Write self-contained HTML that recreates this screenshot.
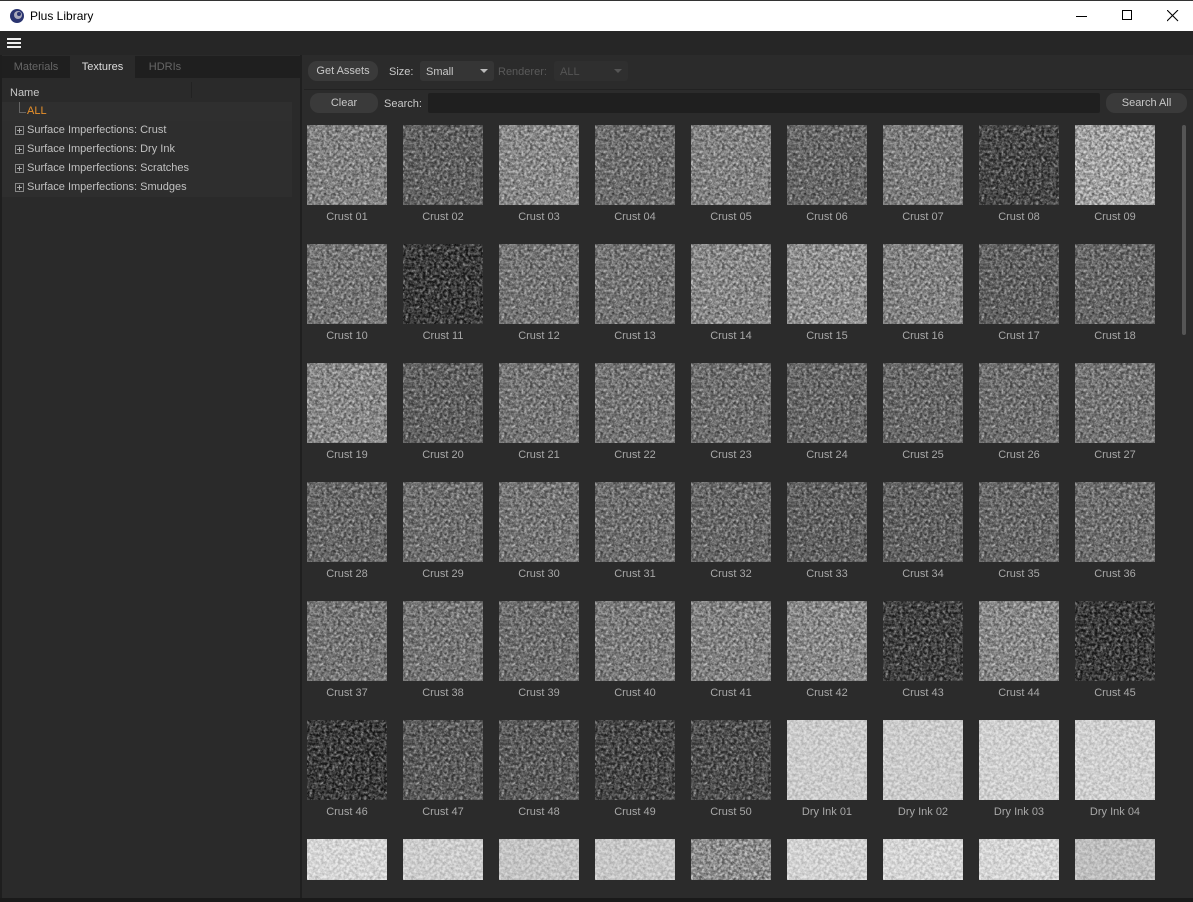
<!DOCTYPE html>
<html style="overflow:hidden;width:1193px;height:902px"><head><meta charset="utf-8"><style>
*{margin:0;padding:0;box-sizing:border-box}
body{width:1193px;height:902px;background:#1f1f1f;font-family:"Liberation Sans",sans-serif;font-size:11px;color:#c8c8c8;position:relative;overflow:hidden}
.a{position:absolute}
.title{left:0;top:0;width:1193px;height:31px;background:#fff;border-top:1px solid #333}
.title span{position:absolute;left:30px;top:8px;font-size:12px;color:#000}
.menu{left:0;top:31px;width:1193px;height:24px;background:#262626}
.left{left:0;top:55px;width:300px;height:843px;background:#2a2a2a;border-left:2px solid #1e1e1e}
.tabs{left:2px;top:56px;width:298px;height:22px;background:#1f1f1f}
.tab{position:absolute;top:0;height:22px;line-height:22px;text-align:center;color:#666}
.right{left:302px;top:55px;width:891px;height:843px;background:#2b2b2b}
.btn{position:absolute;background:#3a3a3a;border-radius:9px;color:#c8c8c8;text-align:center;line-height:20px;height:20px}
.tile{position:absolute;width:80px;height:80px;overflow:hidden}
.lbl{position:absolute;width:96px;text-align:center;color:#a8a8a8;font-size:11px}
.row{position:absolute;left:2px;width:290px;height:19px;line-height:19px;padding-left:25px;color:#c0c0c0;background:#2e2e2e}
.pl{position:absolute;left:13px;top:5px;width:9px;height:9px;border:1px solid #888}
.pl:before{content:"";position:absolute;left:1px;top:3px;width:5px;height:1px;background:#aaa}
.pl:after{content:"";position:absolute;left:3px;top:1px;width:1px;height:5px;background:#aaa}
#g{position:absolute;left:0;top:0;width:1193px;height:880px;overflow:hidden}
</style></head><body>
<svg width="0" height="0" style="position:absolute"><defs>
<filter id="n" x="0" y="0" width="100%" height="100%"><feTurbulence type="fractalNoise" baseFrequency="0.35" numOctaves="3" seed="3"/><feColorMatrix type="matrix" values="0 0 0 0 1  0 0 0 0 1  0 0 0 0 1  1.8 0 0 0 -0.55"/></filter>
<filter id="m" x="0" y="0" width="100%" height="100%"><feTurbulence type="fractalNoise" baseFrequency="0.35" numOctaves="3" seed="7"/><feColorMatrix type="matrix" values="0 0 0 0 0  0 0 0 0 0  0 0 0 0 0  1.8 0 0 0 -0.55"/></filter>
</defs></svg>
<div class="a title"><svg class="a" style="left:9px;top:7px" width="16" height="16"><circle cx="8" cy="8" r="7" fill="#2a3470"/><circle cx="9" cy="7" r="4" fill="#aab"/><circle cx="10" cy="6" r="2" fill="#2a3470"/></svg><span>Plus Library</span>
<div class="a" style="left:1076px;top:15px;width:11px;height:1px;background:#000"></div>
<div class="a" style="left:1122px;top:9px;width:10px;height:10px;border:1px solid #000"></div>
<svg class="a" style="left:1167px;top:9px" width="12" height="12"><path d="M0 0L11 11M11 0L0 11" stroke="#000" stroke-width="1.1"/></svg></div>
<div class="a menu"><div class="a" style="left:7px;top:7px;width:14px;height:2px;background:#eee;box-shadow:0 4px 0 #eee,0 8px 0 #eee"></div></div>
<div class="a left"></div>
<div class="a tabs"><div class="tab" style="left:0;width:68px">Materials</div><div class="tab" style="left:68px;width:65px;background:#2a2a2a;color:#ddd">Textures</div><div class="tab" style="left:133px;width:60px">HDRIs</div></div>
<div class="a" style="left:10px;top:87px;color:#c8c8c8">Name</div>
<div class="a" style="left:191px;top:82px;width:1px;height:16px;background:#222"></div>
<div class="row" style="top:102px;background:#2f2f2f;color:#e8902a"><div class="a" style="left:17px;top:0;width:1px;height:10px;background:#666"></div><div class="a" style="left:17px;top:10px;width:7px;height:1px;background:#666"></div>ALL</div>
<div class="row" style="top:121px"><div class="pl"></div>Surface Imperfections: Crust</div>
<div class="row" style="top:140px"><div class="pl"></div>Surface Imperfections: Dry Ink</div>
<div class="row" style="top:159px"><div class="pl"></div>Surface Imperfections: Scratches</div>
<div class="row" style="top:178px"><div class="pl"></div>Surface Imperfections: Smudges</div>
<div class="a right"></div>
<div class="btn" style="left:308px;top:61px;width:70px">Get Assets</div>
<div class="a" style="left:389px;top:66px">Size:</div>
<div class="a" style="left:420px;top:61px;width:74px;height:20px;background:#353535;border-radius:3px;padding:5px 6px">Small<span style="position:absolute;right:6px;top:8px;border:4px solid transparent;border-top-color:#bbb"></span></div>
<div class="a" style="left:498px;top:66px;color:#5a5a5a">Renderer:</div>
<div class="a" style="left:554px;top:61px;width:74px;height:20px;background:#2f2f2f;border-radius:3px;padding:5px 6px;color:#555">ALL<span style="position:absolute;right:6px;top:8px;border:4px solid transparent;border-top-color:#555"></span></div>
<div class="a" style="left:304px;top:89px;width:889px;height:1px;background:#222"></div>
<div class="btn" style="left:310px;top:93px;width:68px;line-height:21px">Clear</div>
<div class="a" style="left:384px;top:98px">Search:</div>
<div class="a" style="left:428px;top:93px;width:672px;height:20px;background:#1f1f1f;border-radius:2px"></div>
<div class="btn" style="left:1106px;top:93px;width:81px;line-height:21px">Search All</div>
<div class="a" style="left:1182px;top:125px;width:4px;height:210px;background:#555;border-radius:2px"></div>
<div id="g"></div>
<div class="a" style="left:0;top:898px;width:1193px;height:4px;background:#1a1a1a"></div>
<script>
var v=[[140,90,150,110,140,100,130,50,190],[120,30,120,120,150,160,140,90,100],[150,90,120,120,110,100,100,110,120],[100,110,120,110,100,90,90,100,110],[120,120,110,130,140,150,40,150,30],[30,80,80,50,60,220,220,225,225],[232,222,212,215,160,228,232,232,205]];
var h='',k=1;
for(var r=0;r<7;r++)for(var c=0;c<9;c++){var x=307+c*96,y=125+r*119,g=v[r][c];
var op=(g>200)?0.25:0.6;
h+='<div class="tile" style="left:'+x+'px;top:'+y+'px;background:rgb('+g+','+g+','+g+')"><svg width="80" height="80"><rect width="80" height="80" filter="url(#n)" opacity="'+op+'"/><rect width="80" height="80" filter="url(#m)" opacity="'+op+'"/></svg></div>';
if(r<6){var name=k<=50?('Crust '+(k<10?'0'+k:k)):('Dry Ink 0'+(k-50));
h+='<div class="lbl" style="left:'+(x-8)+'px;top:'+(y+86)+'px">'+name+'</div>';}
k++;}
document.getElementById('g').innerHTML=h;
</script>
</body></html>
